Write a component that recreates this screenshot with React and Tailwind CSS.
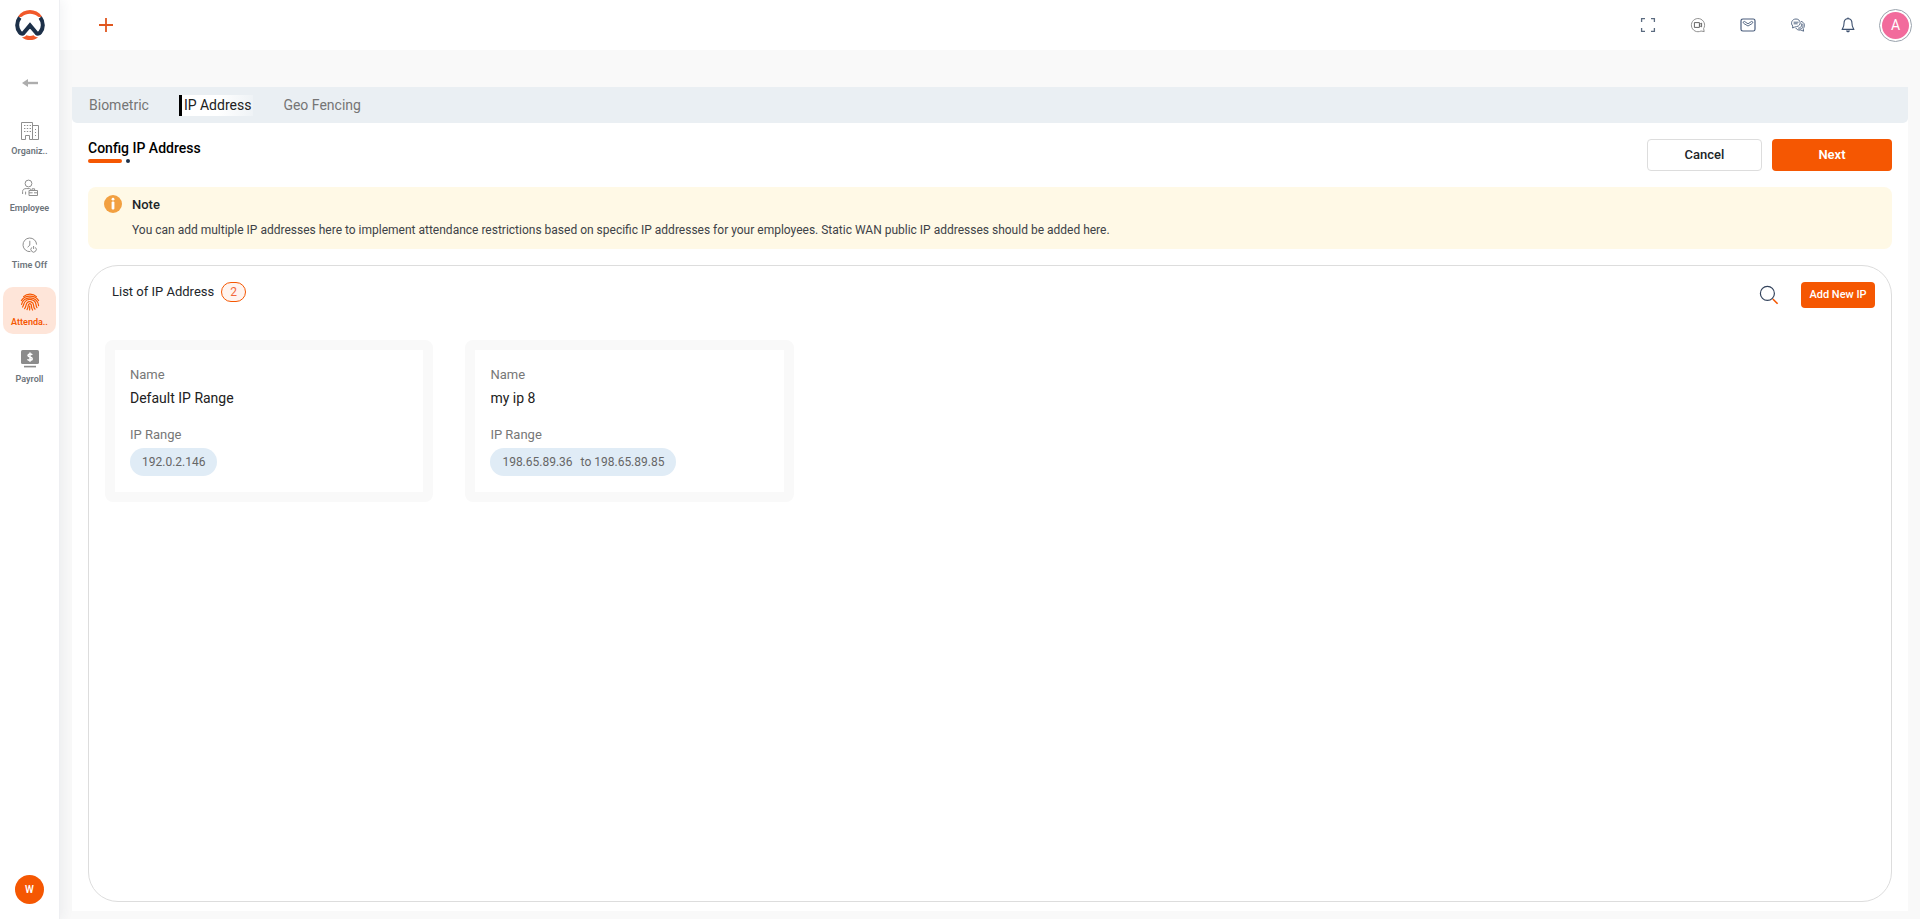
import { useState } from "react";

const menu = [
  { id: "org", label: "Organiz..", icon: BuildingIcon },
  { id: "emp", label: "Employee", icon: EmployeeIcon },
  { id: "off", label: "Time Off", icon: TimeOffIcon },
  { id: "att", label: "Attenda..", icon: FingerprintIcon },
  { id: "pay", label: "Payroll", icon: PayrollIcon },
];

const tabs = ["Biometric", "IP Address", "Geo Fencing"];

const ipList = [
  { id: 1, name: "Default IP Range", from: "192.0.2.146" },
  { id: 2, name: "my ip 8", from: "198.65.89.36", to: "198.65.89.85" },
];

function Logo() {
  return (
    <svg width="30" height="32" viewBox="0 0 30 32" fill="none">
      <path d="M3 7.4C9-1 21-1 27 7.4C25.4 8.4 24 8.2 22.8 7.4C18.4 3.8 11.6 3.8 7.2 7.4C6 8.2 4.6 8.4 3 7.4Z" fill="#f1592a" />
      <path d="M4.8 8.4C1.2 13 1.4 19.4 4.8 23.4C5.8 24.6 7.4 25.2 8.6 24L15 16.4L21.4 24C22.6 25.2 24.2 24.6 25.2 23.4C28.6 19.4 28.8 13 25.2 8.4" stroke="#1d3049" strokeWidth="4" />
      <path d="M6.8 28.2C8.6 28.2 10.2 27.6 11.4 26.2C13.8 27.2 16.2 27.2 18.6 26.2C19.8 27.6 21.4 28.2 23.2 28.2C18.4 32 11.6 32 6.8 28.2Z" fill="#f1592a" />
    </svg>
  );
}

function BackArrow() {
  return (
    <svg width="18" height="10" viewBox="0 0 18 10">
      <path d="M1 5L7 1V9Z" fill="#adadad" />
      <path d="M5 5H17" stroke="#adadad" strokeWidth="2.4" />
    </svg>
  );
}

function BuildingIcon() {
  return (
    <svg width="20" height="20" viewBox="0 0 20 20" fill="none" stroke="currentColor">
      <path d="M1.5 18.5V1.5H12.5V18.5H9.5V14.5H5.5V18.5Z" />
      <path d="M12.5 4.5H18.5V18.5H12.5" />
      <path d="M4 4.5H11M4 7.5H11M4 10.5H11" strokeDasharray="1.4 1.4" />
      <path d="M15.5 8V9M15.5 11V12M15.5 14V15" />
    </svg>
  );
}

function EmployeeIcon() {
  return (
    <svg width="18" height="18" viewBox="0 0 18 18" fill="none" stroke="currentColor">
      <circle cx="7.5" cy="4.5" r="3.4" />
      <path d="M1.6 15V12.6C1.6 10.4 3.2 9.6 5.2 9.6H8.6L10 10.6" />
      <path d="M4.6 15.5V12.6" />
      <path d="M8 11.5H16.5V16.5H8ZM11 11.5V9.8H13.6V11.5M8 13.8H11.6M13 13.8H16.5" />
    </svg>
  );
}

function TimeOffIcon() {
  return (
    <svg width="18" height="18" viewBox="0 0 18 18" fill="none" stroke="currentColor">
      <path d="M9.4 15.6A6.8 6.8 0 1 1 15.6 8.6" />
      <path d="M8.8 4.8V9.2L6.6 11.2" />
      <path d="M10.8 11.4A2.7 2.7 0 1 0 14.4 11.4M12.6 10V13" />
    </svg>
  );
}

function FingerprintIcon() {
  return (
    <svg width="20" height="18" viewBox="0 0 20 18" fill="none" stroke="currentColor" strokeWidth="1.2" strokeLinecap="round">
      <path d="M3.6 3.6C7 .2 13 .2 16.4 3.6" />
      <path d="M1.4 7.6C5 1.6 15 1.6 18.6 7.6" />
      <path d="M1.6 11.4C2.6 2.6 17.4 2.2 18.6 12.6" />
      <path d="M2.6 14C4 12 3.6 10.6 4.8 9C7.6 4.8 15.4 6 16 11.6C16.2 13 16.4 14 17 14.6" />
      <path d="M4.6 15.6C6.4 13.4 5.6 11.6 7 9.8C9.2 7.4 13.4 8.8 13.6 12.2C13.6 13.8 14.2 15.2 15 16.2" />
      <path d="M7 16.6C9 14 7.4 12 9 11C10.2 10.2 11.4 11.2 11.4 12.6C11.4 14.4 11.8 15.8 12.6 17" />
      <path d="M9.6 17C10 15.6 9.8 14.2 9.6 13" />
    </svg>
  );
}

function PayrollIcon() {
  return (
    <svg width="20" height="20" viewBox="0 0 20 20" fill="none">
      <rect x="1" y="1" width="18" height="14" rx="1.6" fill="#8b8b8b" />
      <path d="M4 17.6H16" stroke="#8b8b8b" strokeWidth="1.6" />
      <path d="M12.2 5.8C11.6 4.6 8 4.4 8 6.4C8 8.4 12.2 7.6 12.2 9.8C12.2 11.8 8.2 11.6 7.6 10.2M10 3.4V12.8" stroke="#fff" strokeWidth="1.5" />
    </svg>
  );
}

function FullscreenIcon() {
  return (
    <svg width="16" height="16" viewBox="0 0 16 16" fill="none" stroke="#5b6b80" strokeWidth="1.3">
      <path d="M1.6 5V1.6H5M11 1.6H14.4V5M14.4 11V14.4H11M5 14.4H1.6V11" />
    </svg>
  );
}

function VideoChatIcon() {
  return (
    <svg width="16" height="16" viewBox="0 0 16 16" fill="none" stroke="#858585" strokeWidth="0.9">
      <path d="M13.6 11.6A6.6 6.6 0 1 0 11 14L14.2 14.6Z" />
      <path d="M4.4 5.6H9.4V10.4H4.4ZM9.4 7.4L11.6 6.2V9.8L9.4 8.6" stroke="#555" />
    </svg>
  );
}

function MailIcon() {
  return (
    <svg width="16" height="14" viewBox="0 0 16 14" fill="none" stroke="#4a5d7c" strokeWidth="1.2">
      <rect x="1" y="1" width="14" height="12" rx="1.8" />
      <path d="M4.4 3.4C3 3.4 2.8 5 4 5.6L8 8L12 5.6C13.2 5 13 3.4 11.6 3.4L8 5.8Z" strokeWidth="0.9" />
    </svg>
  );
}

function ChatIcon() {
  return (
    <svg width="16" height="16" viewBox="0 0 16 16" fill="none" stroke="#4a5d7c" strokeWidth="0.9">
      <path d="M2.6 11L2.8 9C.2 6.6 1.8 2 6 2C11 2 11.8 8.8 6.6 9.6C5 9.8 4 10.4 2.6 11Z" />
      <path d="M3.6 5.2H8.6M3.6 6.8H7.6" />
      <path d="M11 4.4C14.8 5.4 15.4 9.2 13.2 11.4L13.6 14.2L10.8 13C8.6 13.4 6.6 12.6 5.8 11" />
      <path d="M11.2 6.4C12.4 8.8 10.8 11 8.2 11.2M12.6 6.8C13.8 9.6 12 12 9.4 12.2" />
    </svg>
  );
}

function BellIcon() {
  return (
    <svg width="14" height="16" viewBox="0 0 14 16" fill="none" stroke="#3f5270" strokeWidth="1.1">
      <path d="M7 1.6C4 1.6 3 4 3 6.4C3 9.6 1.8 10.4 1.2 12.4H12.8C12.2 10.4 11 9.6 11 6.4C11 4 10 1.6 7 1.6Z" />
      <path d="M5 13.4H9C8.8 15.8 5.2 15.8 5 13.4Z" fill="#3f5270" stroke="none" />
      <path d="M7 .4V1.6" />
    </svg>
  );
}

function SearchIcon() {
  return (
    <svg width="20" height="20" viewBox="0 0 20 20" fill="none">
      <circle cx="8.4" cy="8.4" r="7" stroke="#33435c" strokeWidth="1.2" />
      <path d="M13.8 14L18.6 18.8" stroke="#f55702" strokeWidth="1.6" />
    </svg>
  );
}

function InfoIcon() {
  return (
    <svg width="18" height="18" viewBox="0 0 18 18">
      <circle cx="9" cy="9" r="9" fill="#f2a041" />
      <circle cx="9" cy="4.2" r="1.4" fill="#fff" />
      <rect x="7.6" y="6.6" width="2.8" height="8" rx="1" fill="#fff" />
    </svg>
  );
}

const headerIcons = [
  { label: "Full screen", icon: FullscreenIcon },
  { label: "Meetings", icon: VideoChatIcon },
  { label: "Mail", icon: MailIcon },
  { label: "Chat", icon: ChatIcon },
  { label: "Notifications", icon: BellIcon },
];

const Sidebar = () => {
  const [active, setActive] = useState("att");

  return (
    <aside className="relative z-10 flex w-[60px] shrink-0 flex-col items-center border-r border-[#eeeff2] bg-white pt-[9px] pb-[15px] shadow-[2px_0_12px_rgba(40,50,90,0.07)]">
      <a href="#home" aria-label="Home"><Logo /></a>
      <button aria-label="Collapse menu" className="mt-[37px]">
        <BackArrow />
      </button>

      <nav className="mt-7 flex flex-col gap-[10px]">
        {menu.map(({ id, label, icon: Icon }) => (
          <button
            key={id}
            onClick={() => setActive(id)}
            className={`flex h-[47px] w-[53px] flex-col items-center justify-between rounded-[10px] pt-[5px] pb-[6px] ${
              active === id ? "bg-[#fee5d9] text-[#f55702]" : "text-[#8f8f8f]"
            }`}
          >
            <span className="flex h-5 items-center"><Icon /></span>
            <span className={`text-[9px] leading-3 font-semibold ${active === id ? "text-[#f55702]" : "text-[#6d747b]"}`}>
              {label}
            </span>
          </button>
        ))}
      </nav>

      <button className="mt-auto flex size-[29px] items-center justify-center rounded-full bg-[#f55702] text-[10px] font-semibold text-white">
        W
      </button>
    </aside>
  );
};

const Header = () => (
  <header className="flex h-[50px] shrink-0 items-center justify-between bg-white pr-2 pl-[39px]">
    <button aria-label="Add">
      <svg width="14" height="14" viewBox="0 0 14 14" stroke="#e0571f" strokeWidth="1.8">
        <path d="M7 0V14M0 7H14" />
      </svg>
    </button>
    <div className="flex items-center">
      {headerIcons.map(({ label, icon: Icon }) => (
        <button key={label} aria-label={label} className="flex w-[50px] justify-center">
          <Icon />
        </button>
      ))}
      <button className="ml-[6px] flex size-[33px] items-center justify-center rounded-full border border-[#9aa3ad] bg-white">
        <span className="flex size-[27px] items-center justify-center rounded-full bg-[#f26b9c] text-sm text-white">A</span>
      </button>
    </div>
  </header>
);

const IpCard = ({ item }) => (
  <div className="h-[162px] rounded-lg border-[10px] border-[#f9f9f9] px-[15px] pt-4">
    <p className="text-[13px] leading-[18px] text-[#777777]">Name</p>
    <p className="mt-1 text-sm leading-5 text-[#212121]">{item.name}</p>
    <p className="mt-[18px] text-[13px] leading-[18px] text-[#777777]">IP Range</p>
    <span className="mt-1 inline-flex h-7 items-center rounded-full bg-[#e0ecf6] px-3 text-xs text-[#666666]">
      {item.from}
      {item.to && <span className="ml-2">to {item.to}</span>}
    </span>
  </div>
);

export default function App() {
  const [tab, setTab] = useState("IP Address");

  return (
    <div className="flex min-h-screen bg-[#f9f9f9] font-[Roboto,sans-serif] text-[#212529]">
      <Sidebar />

      <div className="flex min-w-0 flex-1 flex-col">
        <Header />

        <main className="mx-3 mt-[37px] mb-2 flex flex-1 flex-col bg-white">
          {/* Tabs */}
          <div className="flex h-9 items-center gap-[30px] rounded-b-[5px] bg-[#eaeff3] px-[17px] text-sm">
            {tabs.map((t) => (
              <button
                key={t}
                onClick={() => setTab(t)}
                className={
                  tab === t
                    ? "border-l-[3px] border-black bg-linear-to-r from-white from-50% to-[#eff3f6] px-[2px] leading-[21px] text-[#212121]"
                    : "leading-[21px] text-[#757575]"
                }
              >
                {t}
              </button>
            ))}
          </div>

          <div className="flex flex-1 flex-col px-4 pt-4 pb-[9px]">
            <div className="flex items-start justify-between">
              <div>
                <h1 className="text-sm leading-[18px] font-medium text-black">Config IP Address</h1>
                <div className="mt-[2px] flex items-center gap-1">
                  <span className="h-1 w-[34px] rounded-full bg-[#f55702]" />
                  <span className="size-1 rounded-full bg-[#1d3049]" />
                </div>
              </div>
              <div className="flex gap-[10px] text-[13px]">
                <button className="h-8 w-[115px] rounded border border-[#dddddd] bg-white font-medium">Cancel</button>
                <button className="h-8 w-[120px] rounded bg-[#f55702] font-semibold text-white">Next</button>
              </div>
            </div>

            {/* Note */}
            <div className="mt-4 flex gap-[10px] rounded-lg bg-[#fff9e6] px-4 pt-2 pb-[10px]">
              <InfoIcon />
              <div>
                <h2 className="text-[13px] leading-5 font-medium">Note</h2>
                <p className="mt-[6px] text-xs leading-[18px] text-[#3d4247]">
                  You can add multiple IP addresses here to implement attendance restrictions based on specific IP addresses for your employees. Static WAN public IP addresses should be added here.
                </p>
              </div>
            </div>

            {/* IP list */}
            <section className="mt-4 flex-1 rounded-[30px] border border-[#dddddd]">
              <div className="flex items-start justify-between pt-4 pr-4 pl-[23px]">
                <div className="flex items-center gap-[7px] text-[13px]">
                  <h2>List of IP Address</h2>
                  <span className="flex h-5 w-[25px] items-center justify-center rounded-full border border-[#f55702] bg-[#fff4ef] text-xs text-[#f2683c]">
                    {ipList.length}
                  </span>
                </div>
                <div className="flex items-center gap-[22px]">
                  <button aria-label="Search"><SearchIcon /></button>
                  <button className="h-[26px] w-[74px] rounded bg-[#f55702] text-[11px] font-medium text-white">Add New IP</button>
                </div>
              </div>

              <div className="mt-8 grid grid-cols-5">
                {ipList.map((item) => (
                  <div key={item.id} className="px-4">
                    <IpCard item={item} />
                  </div>
                ))}
              </div>
            </section>
          </div>
        </main>
      </div>
    </div>
  );
}
